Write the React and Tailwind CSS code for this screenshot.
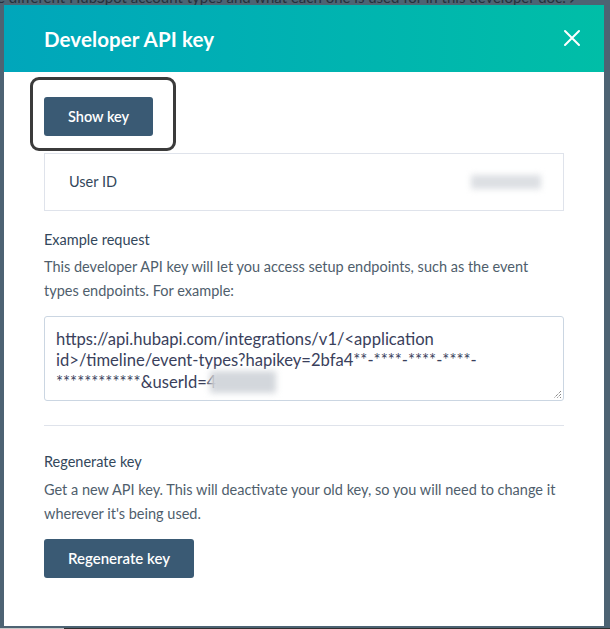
import React from 'react';

const font = { fontFamily: 'Lato, "Noto Sans", sans-serif' };

const Blur = ({ className }) => (
  <span className={`inline-block bg-[#d3d7dc] blur-[3px] ${className}`} />
);

const App = () => {
  return (
    <div className="w-[610px] h-[629px] bg-[#4d6373] overflow-hidden flex flex-col" style={font}>
      {/* page text behind the overlay */}
      <div className="h-[5px] overflow-hidden">
        <div className="-mt-[13px] -ml-[3px] whitespace-nowrap text-[15px] leading-[20px] text-[#24313c]">
          e different HubSpot account types and what each one is used for in this developer doc. ↗
        </div>
      </div>

      <div className="mx-[4px] w-[600px] h-[621px] bg-white flex flex-col">
        <div className="h-[67px] bg-gradient-to-r from-[#00a6bb] to-[#00bea7] flex items-center justify-between pl-[40px] pr-[23px]">
          <h1 className="text-white text-[20.5px] font-bold tracking-[0.1px] pt-[2px]">Developer API key</h1>
          <svg width="18" height="18" viewBox="0 0 18 18" className="mt-[-1px]">
            <path d="M2 2 L16 16 M16 2 L2 16" stroke="white" strokeWidth="2" strokeLinecap="round" />
          </svg>
        </div>

        <div className="px-[40px] pt-[25px] flex flex-col">
          <div className="relative w-fit">
            <button className="h-[39px] px-[24px] rounded-[3px] bg-[#3a5a74] text-white text-[14.5px] font-semibold">
              Show key
            </button>
            <div className="absolute left-[-14px] top-[-20px] w-[146px] h-[74px] border-[3px] border-[#3b3b3b] rounded-[9px]" />
          </div>

          <div className="mt-[17px] h-[58px] border border-[#dfe3eb] flex items-center justify-between pl-[24px] pr-[24px]">
            <span className="text-[14.5px] text-[#33475b]">User ID</span>
            <Blur className="w-[70px] h-[14px] mr-[-2px] bg-[#dcdfe3]" />
          </div>

          <div className="mt-[17px] text-[14.5px] leading-[24px] text-[#33475b]">Example request</div>
          <p className="mt-[3px] text-[14.5px] leading-[24px] text-[#4f5e6c] whitespace-nowrap">
            This developer API key will let you access setup endpoints, such as the event<br />
            types endpoints. For example:
          </p>

          <div className="relative mt-[13px] h-[85px] border border-[#cbd6e2] rounded-[3px] px-[11px] pt-[12px] text-[16.6px] leading-[21px] text-[#3a3f5c] whitespace-nowrap">
            <div>https://api.hubapi.com/integrations/v1/&lt;application</div>
            <div>id&gt;/timeline/event-types?hapikey=2bfa4**-****-****-****-</div>
            <div className="flex items-center">
              <span>************&amp;userId=4</span>
              <Blur className="w-[66px] h-[22px] -ml-[6px]" />
            </div>
            <svg width="9" height="9" viewBox="0 0 9 9" className="absolute right-[1px] bottom-[1px]">
              <path d="M8 1 L1 8 M8 4 L4 8 M8 7 L7 8" stroke="#555" strokeWidth="1" strokeDasharray="1 1" />
            </svg>
          </div>

          <div className="mt-[24px] h-px bg-[#dfe3eb]" />

          <div className="mt-[24px] text-[14.5px] leading-[24px] text-[#33475b]">Regenerate key</div>
          <p className="mt-[4px] text-[14.5px] leading-[24px] text-[#4f5e6c] whitespace-nowrap">
            Get a new API key. This will deactivate your old key, so you will need to change it<br />
            wherever it's being used.
          </p>

          <button className="mt-[13px] w-fit h-[39px] px-[24px] rounded-[3px] bg-[#3a5a74] text-white text-[15px] font-semibold">
            Regenerate key
          </button>
        </div>
      </div>

      <div className="mt-[2px] h-px flex">
        <div className="w-[64px] bg-[#c8c8c8]" />
        <div className="flex-1 bg-[#2e2e2e]" />
      </div>
    </div>
  );
};

export default App;
